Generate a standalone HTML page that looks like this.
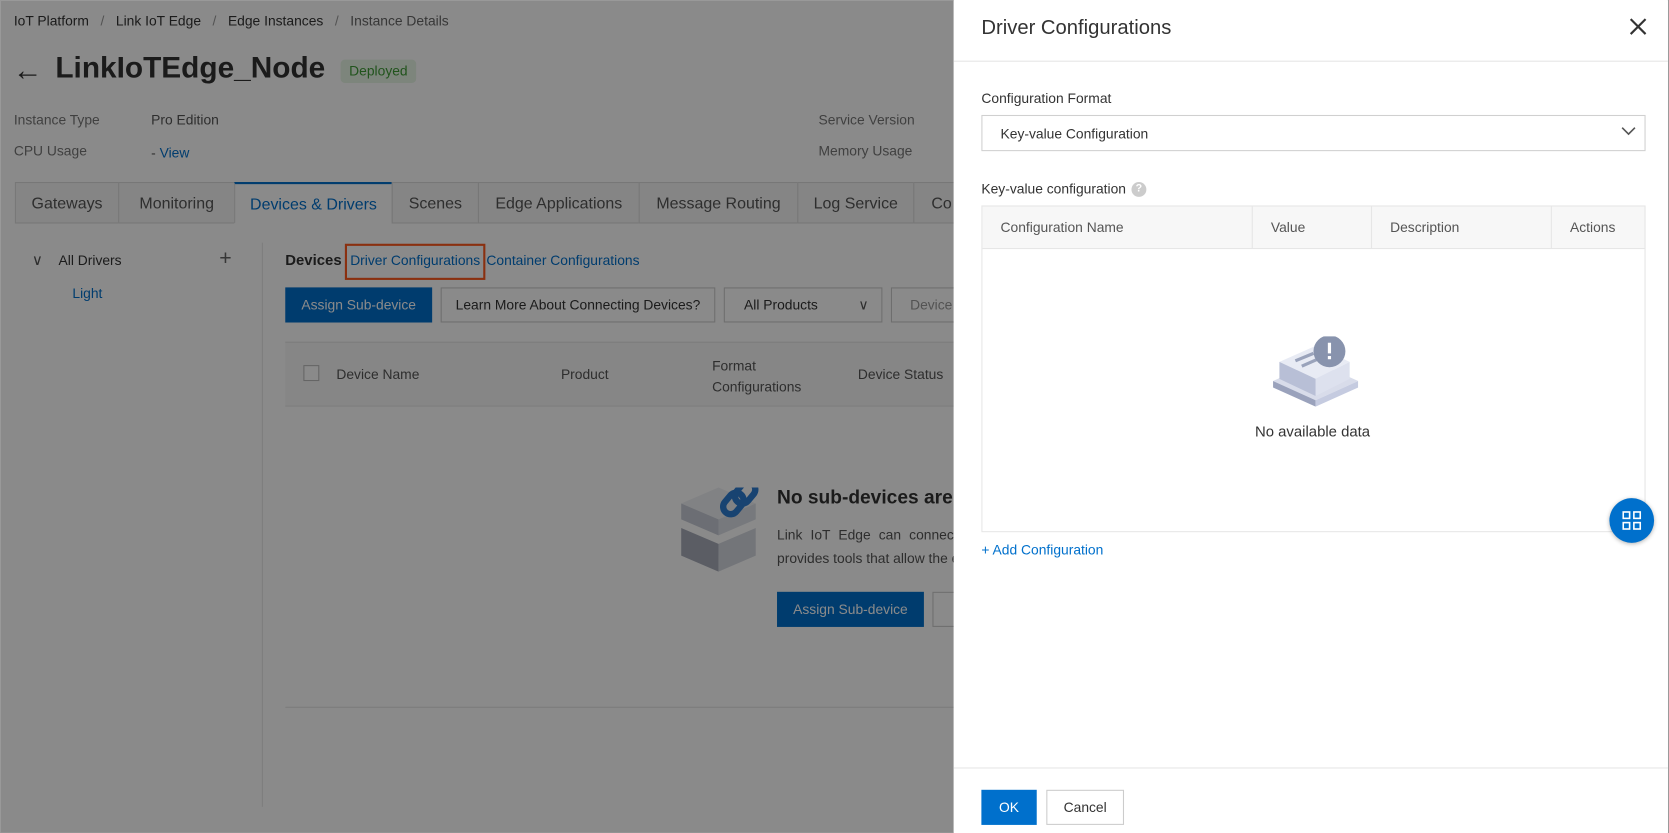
<!DOCTYPE html>
<html><head><meta charset="utf-8"><style>
html,body{margin:0;padding:0;width:1669px;height:833px;overflow:hidden;background:#fff}
#w{position:absolute;left:0;top:0;width:1568px;height:783px;transform:scale(1.06441);transform-origin:0 0;font-family:"Liberation Sans",sans-serif;color:#333;overflow:hidden}
.a{position:absolute;white-space:nowrap}
.page{position:absolute;left:0;top:0;width:1568px;height:783px;background:#fff}
.ov{position:absolute;left:0;top:0;width:896px;height:783px;background:rgba(0,0,0,0.46)}
.tab{position:absolute;top:171px;height:39px;border:1px solid #ddd;background:#f5f5f5;font-size:15px;color:#555;text-align:center;line-height:39px;box-sizing:border-box}
.btn{position:absolute;box-sizing:border-box;font-size:13px;line-height:31px;text-align:center}
.drawer{position:absolute;left:896px;top:0;width:671px;height:783px;background:#fff}
.th{position:absolute;top:0;height:39px;line-height:39px;font-size:13px;color:#555;border-right:1px solid #e6e6e6;box-sizing:border-box;padding-left:17px}
</style></head><body><div id="w">
<div class="page">
<div class="a" style="left:13px;top:12px;font-size:13px;color:#333">IoT Platform &nbsp; <span style="color:#999">/</span> &nbsp; Link IoT Edge &nbsp; <span style="color:#999">/</span> &nbsp; Edge Instances &nbsp; <span style="color:#999">/</span> &nbsp; <span style="color:#666">Instance Details</span></div>
<div class="a" style="left:12px;top:50px;font-size:28px;color:#333">&#8592;</div>
<div class="a" style="left:52px;top:48px;font-size:28px;font-weight:bold;color:#333">LinkIoTEdge_Node</div>
<div class="a" style="left:320px;top:56px;width:71px;height:22px;border-radius:4px;background:#e8f5e6;color:#3d9b35;font-size:13px;line-height:22px;text-align:center">Deployed</div>
<div class="a" style="left:13px;top:105px;font-size:13px;color:#777">Instance Type</div>
<div class="a" style="left:142px;top:105px;font-size:13px;color:#555">Pro Edition</div>
<div class="a" style="left:13px;top:134px;font-size:13px;color:#777">CPU Usage</div>
<div class="a" style="left:142px;top:136px;font-size:13px;color:#555">- <span style="color:#0070cc">View</span></div>
<div class="a" style="left:769px;top:105px;font-size:13px;color:#777">Service Version</div>
<div class="a" style="left:769px;top:134px;font-size:13px;color:#777">Memory Usage</div>
<div class="tab" style="left:14px;width:98px">Gateways</div>
<div class="tab" style="left:111px;width:110px">Monitoring</div>
<div class="tab" style="left:220px;width:149px;background:#fff;border-top:2px solid #0070cc;border-bottom-color:#fff;color:#0070cc">Devices &amp; Drivers</div>
<div class="tab" style="left:368px;width:82px">Scenes</div>
<div class="tab" style="left:449px;width:152px">Edge Applications</div>
<div class="tab" style="left:600px;width:150px">Message Routing</div>
<div class="tab" style="left:749px;width:110px">Log Service</div>
<div class="tab" style="left:858px;width:100px;text-align:left;padding-left:16px">Co</div>
<div class="a" style="left:30px;top:236px;font-size:14px;color:#555">&#8744;</div>
<div class="a" style="left:55px;top:237px;font-size:13px;color:#333">All Drivers</div>
<div class="a" style="left:206px;top:232px;font-size:20px;color:#666">+</div>
<div class="a" style="left:68px;top:268px;font-size:13px;color:#0070cc">Light</div>
<div class="a" style="left:246px;top:228px;width:1px;height:530px;background:#e6e6e6"></div>
<div class="a" style="left:268px;top:236px;font-size:14px;font-weight:bold;color:#333">Devices</div>
<div class="a" style="left:324px;top:229px;width:128px;height:30px;border:2px solid #ff5a1f"></div>
<div class="a" style="left:329px;top:237px;font-size:13px;color:#0070cc">Driver Configurations</div>
<div class="a" style="left:457px;top:237px;font-size:13px;color:#0070cc">Container Configurations</div>
<div class="btn" style="left:268px;top:270px;width:138px;height:33px;background:#0070cc;color:#fff;line-height:33px">Assign Sub-device</div>
<div class="btn" style="left:414px;top:270px;width:258px;height:33px;border:1px solid #ccc;color:#333">Learn More About Connecting Devices?</div>
<div class="btn" style="left:680px;top:270px;width:149px;height:33px;border:1px solid #ccc;color:#333;text-align:left;padding-left:18px">All Products<span style="position:absolute;right:12px;color:#555">&#8744;</span></div>
<div class="btn" style="left:837px;top:270px;width:80px;height:33px;border:1px solid #ccc;color:#999;text-align:left;padding-left:17px">Device</div>
<div class="a" style="left:268px;top:321px;width:640px;height:59px;background:#f7f7f7;border-top:1px solid #e6e6e6;border-bottom:1px solid #e6e6e6"></div>
<div class="a" style="left:285px;top:343px;width:13px;height:13px;border:1px solid #bbb;background:#fff"></div>
<div class="a" style="left:316px;top:344px;font-size:13px;color:#555">Device Name</div>
<div class="a" style="left:527px;top:344px;font-size:13px;color:#555">Product</div>
<div class="a" style="left:669px;top:334px;font-size:13px;color:#555;line-height:20px">Format<br>Configurations</div>
<div class="a" style="left:806px;top:344px;font-size:13px;color:#555">Device Status</div>
<svg class="a" style="left:638px;top:458px" width="80" height="80" viewBox="0 0 80 80"><polygon points="2,15 37,0 72,15 37,30" fill="#eef0f4"/><polygon points="2,15 37,30 37,45 2,30" fill="#c8ccd6"/><polygon points="37,30 72,15 72,30 37,45" fill="#dde0e7"/><polygon points="2,38 37,53 37,79 2,64" fill="#a8adba"/><polygon points="37,53 72,38 72,64 37,79" fill="#d5d8e0"/><g fill="none" stroke="#2d7cd1" stroke-width="6"><rect x="44" y="4" width="14" height="22" rx="7" transform="rotate(40 51 15)"/><rect x="55" y="-6" width="14" height="22" rx="7" transform="rotate(40 62 5)"/></g></svg>
<div class="a" style="left:730px;top:457px;font-size:18px;font-weight:bold;color:#333">No sub-devices are ac</div>
<div class="a" style="left:730px;top:492px;font-size:13px;color:#555;line-height:22px;word-spacing:4px">Link IoT Edge can connect<br><span style="word-spacing:0">provides tools that allow the e</span></div>
<div class="btn" style="left:730px;top:556px;width:138px;height:33px;background:#0070cc;color:#fff;line-height:33px">Assign Sub-device</div>
<div class="btn" style="left:876px;top:556px;width:40px;height:33px;border:1px solid #ccc"></div>
<div class="a" style="left:268px;top:664px;width:640px;height:1px;background:#e6e6e6"></div>
</div>
<div class="ov"></div>
<div class="a" style="left:0;top:0;width:1566px;height:781px;border:1px solid #999"></div>
<div class="drawer">
<div class="a" style="left:26px;top:16px;font-size:19px;color:#333">Driver Configurations</div>
<svg class="a" style="left:635px;top:17px" width="16" height="16"><path d="M1 1L15 15M15 1L1 15" stroke="#333" stroke-width="2"/></svg>
<div class="a" style="left:0;top:57px;width:671px;height:1px;background:#e6e6e6"></div>
<div class="a" style="left:26px;top:85px;font-size:13px;color:#333">Configuration Format</div>
<div class="a" style="left:26px;top:108px;width:622px;height:32px;border:1px solid #d0d0d0"></div>
<div class="a" style="left:44px;top:118px;font-size:13px;color:#333">Key-value Configuration</div>
<svg class="a" style="left:627px;top:118px" width="14" height="10"><path d="M1 2L7 8L13 2" fill="none" stroke="#555" stroke-width="1.5"/></svg>
<div class="a" style="left:26px;top:170px;font-size:13px;color:#333">Key-value configuration</div>
<div class="a" style="left:167px;top:171px;width:14px;height:14px;border-radius:7px;background:#ccc;color:#fff;font-size:10px;line-height:14px;text-align:center;font-weight:bold">?</div>
<div class="a" style="left:26px;top:193px;width:622px;height:305px;border:1px solid #e6e6e6">
<div class="a" style="left:0;top:0;width:622px;height:39px;background:#f7f7f7;border-bottom:1px solid #e6e6e6"></div>
<div class="th" style="left:0;width:254px">Configuration Name</div>
<div class="th" style="left:254px;width:112px">Value</div>
<div class="th" style="left:366px;width:169px">Description</div>
<div class="th" style="left:535px;width:87px;border-right:0">Actions</div>
<svg class="a" style="left:273px;top:122px" width="80" height="66" viewBox="0 0 80 66"><polygon points="0,42 40,24 80,42 40,60" fill="#d8dcea"/><polygon points="0,42 40,60 40,66 0,48" fill="#9aa2bc"/><polygon points="40,60 80,42 80,48 40,66" fill="#c5cbe0"/><polygon points="6,24 40,9 72,24 40,40" fill="#e8ebf4"/><polygon points="6,24 40,40 40,56 6,40" fill="#b8bfd6"/><polygon points="40,40 72,24 72,40 40,56" fill="#dde1ee"/><path d="M21 23L38 16M27 28L43 21" stroke="#9aa3bb" stroke-width="3"/><circle cx="53" cy="14" r="15" fill="#8893ad"/><rect x="51.5" y="6" width="3" height="10" fill="#fff"/><rect x="51.5" y="18.5" width="3" height="3" fill="#fff"/></svg>
<div class="a" style="left:256px;top:203px;font-size:14px;color:#333">No available data</div>
</div>
<div class="a" style="left:26px;top:509px;font-size:13px;color:#0070cc">+ Add Configuration</div>
<div class="a" style="left:0;top:721px;width:671px;height:1px;background:#e6e6e6"></div>
<div class="btn" style="left:26px;top:742px;width:52px;height:33px;background:#0070cc;color:#fff;line-height:33px">OK</div>
<div class="btn" style="left:87px;top:742px;width:73px;height:33px;border:1px solid #ccc;color:#333">Cancel</div>
</div>
<div class="a" style="left:1512px;top:468px;width:42px;height:42px;border-radius:21px;background:#0070cc;box-shadow:0 1px 4px rgba(0,0,0,.3)"></div>
<svg class="a" style="left:1524px;top:480px" width="18" height="18"><g fill="none" stroke="#fff" stroke-width="1.5"><rect x="1" y="1" width="6" height="6"/><rect x="11" y="1" width="6" height="6"/><rect x="1" y="11" width="6" height="6"/><rect x="11" y="11" width="6" height="6"/></g></svg>
</div></body></html>
